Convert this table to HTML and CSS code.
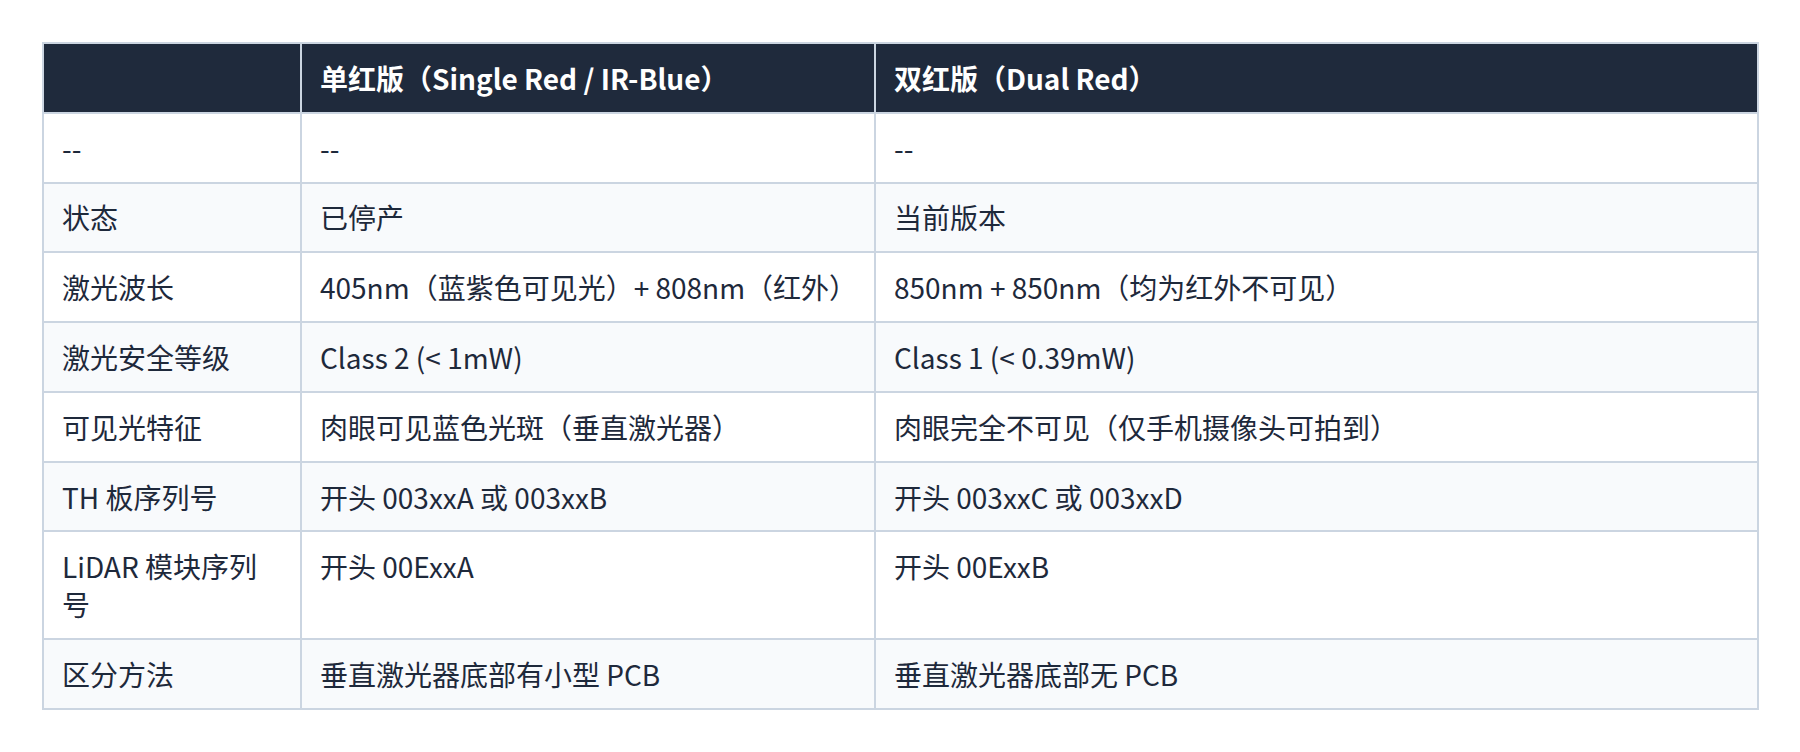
FILE: index.html
```html
<!DOCTYPE html>
<html lang="zh-CN">
<head>
<meta charset="utf-8">
<title>单红版 vs 双红版</title>
<link rel="stylesheet" href="styles.css">
</head>
<body>
<div class="page">
  <table class="spec">
    <colgroup>
      <col class="c1">
      <col class="c2">
      <col class="c3">
    </colgroup>
    <thead>
      <tr>
        <th></th>
        <th>单红版（Single Red / IR-Blue）</th>
        <th>双红版（Dual Red）</th>
      </tr>
    </thead>
    <tbody>
      <tr><td>--</td><td>--</td><td>--</td></tr>
      <tr><td>状态</td><td>已停产</td><td>当前版本</td></tr>
      <tr><td>激光波长</td><td>405nm（蓝紫色可见光）+ 808nm（红外）</td><td>850nm + 850nm（均为红外不可见）</td></tr>
      <tr><td>激光安全等级</td><td>Class 2 (&lt; 1mW)</td><td>Class 1 (&lt; 0.39mW)</td></tr>
      <tr><td>可见光特征</td><td>肉眼可见蓝色光斑（垂直激光器）</td><td>肉眼完全不可见（仅手机摄像头可拍到）</td></tr>
      <tr><td>TH 板序列号</td><td>开头 003xxA 或 003xxB</td><td>开头 003xxC 或 003xxD</td></tr>
      <tr><td>LiDAR 模块序列号</td><td>开头 00ExxA</td><td>开头 00ExxB</td></tr>
      <tr><td>区分方法</td><td>垂直激光器底部有小型 PCB</td><td>垂直激光器底部无 PCB</td></tr>
    </tbody>
  </table>
</div>
</body>
</html>
```

FILE: styles.css
```css
html, body {
  margin: 0;
  padding: 0;
  background: #ffffff;
}

.page {
  padding: 42px 41px 42px 42px;
}

.spec {
  width: 100%;
  border-collapse: collapse;
  table-layout: fixed;
  font-family: "Noto Sans CJK SC", "Noto Sans", sans-serif;
  font-size: 28px;
  line-height: 38px;
  color: #1e293b;
}

.c1 { width: 258px; }
.c2 { width: 574px; }

.spec th,
.spec td {
  border: 2px solid #cbd5e1;
  padding: 14.9px 18px;
  text-align: left;
  vertical-align: top;
}

.spec th {
  background: #1f2a3c;
  color: #ffffff;
  font-weight: 700;
}

.spec tbody tr:nth-child(even) td {
  background: #f8fafc;
}

.spec tbody tr:nth-child(odd) td {
  background: #ffffff;
}
```
